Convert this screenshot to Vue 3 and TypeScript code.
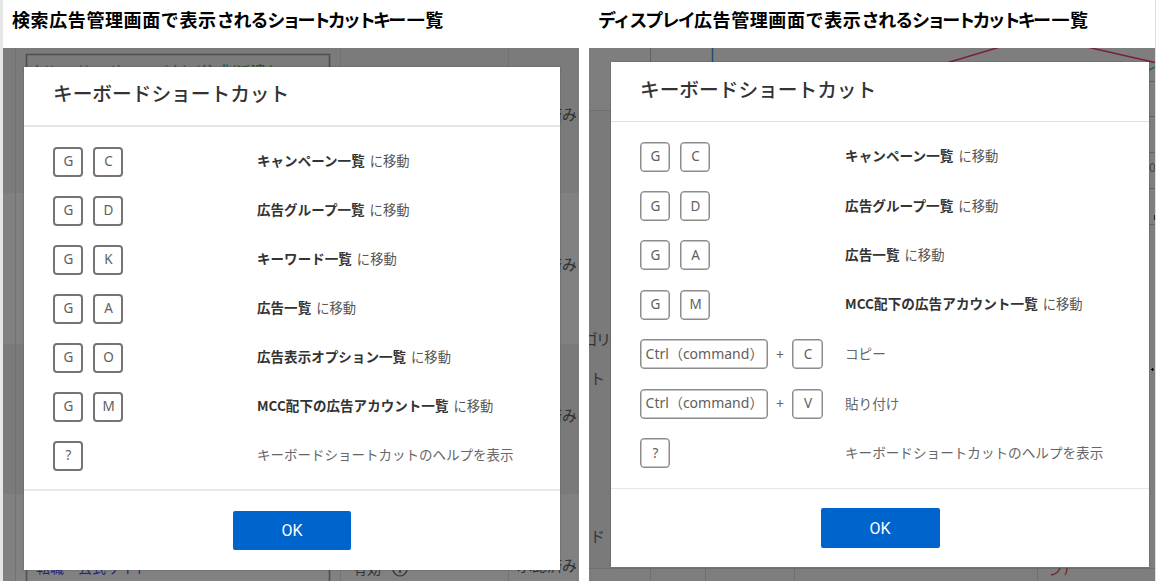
<script setup lang="ts">
interface Shortcut {
  keys: string[]
  plus?: boolean
  target?: string
  text: string
}

interface HeadingPart {
  text: string
  kind: string
}

interface Panel {
  id: string
  heading: HeadingPart[]
  shortcuts: Shortcut[]
}

const MOVE = 'に移動'
const HELP: Shortcut = { keys: ['?'], text: 'キーボードショートカットのヘルプを表示' }

const headingTail: HeadingPart[] = [
  { text: 'で表示', kind: 'kanji' },
  { text: 'される', kind: 'hira' },
  { text: 'ショートカットキ', kind: 'kana' },
  { text: 'ー一覧', kind: 'kanji' },
]

const panels: Panel[] = [
  {
    id: 'search',
    heading: [{ text: '検索広告管理画面', kind: 'kanji' }, ...headingTail],
    shortcuts: [
      { keys: ['G', 'C'], target: 'キャンペーン一覧', text: MOVE },
      { keys: ['G', 'D'], target: '広告グループ一覧', text: MOVE },
      { keys: ['G', 'K'], target: 'キーワード一覧', text: MOVE },
      { keys: ['G', 'A'], target: '広告一覧', text: MOVE },
      { keys: ['G', 'O'], target: '広告表示オプション一覧', text: MOVE },
      { keys: ['G', 'M'], target: 'MCC配下の広告アカウント一覧', text: MOVE },
      HELP,
    ],
  },
  {
    id: 'display',
    heading: [
      { text: 'ディスプレイ', kind: 'kana-wide' },
      { text: '広告管理画面', kind: 'kanji' },
      ...headingTail,
    ],
    shortcuts: [
      { keys: ['G', 'C'], target: 'キャンペーン一覧', text: MOVE },
      { keys: ['G', 'D'], target: '広告グループ一覧', text: MOVE },
      { keys: ['G', 'A'], target: '広告一覧', text: MOVE },
      { keys: ['G', 'M'], target: 'MCC配下の広告アカウント一覧', text: MOVE },
      { keys: ['Ctrl（command）', 'C'], plus: true, text: 'コピー' },
      { keys: ['Ctrl（command）', 'V'], plus: true, text: '貼り付け' },
      HELP,
    ],
  },
]

// y of the status text in each table row behind the search modal
const statusRows = [120, 270, 421, 571]
</script>

<template>
  <div class="page">
    <section v-for="p in panels" :key="p.id" class="panel" :class="p.id">
      <h1 class="heading">
        <span v-for="(h, i) in p.heading" :key="i" :class="h.kind">{{ h.text }}</span>
      </h1>

      <div class="screen">
        <!-- dimmed page behind the modal -->
        <svg v-if="p.id === 'search'" class="backdrop" width="576" height="533" viewBox="3 48 576 533">
          <rect x="3" y="48" width="576" height="533" fill="#7b7b7b" />
          <rect x="3" y="193" width="576" height="151" fill="#818181" />
          <rect x="3" y="344" width="576" height="150" fill="#7a7a7a" />
          <rect x="3" y="494" width="576" height="87" fill="#818181" />
          <path d="M15.5 48V581M340.5 48V581M508.5 48V581" stroke="#727272" />
          <path d="M26.5 70V54.5H329.5V70M26.5 568V581M329.5 568V581" fill="none" stroke="#4f4f4f" stroke-width="1.6" />
          <text x="35" y="76" fill="#4a4f49" font-size="14" textLength="237" lengthAdjust="spacingAndGlyphs">https://motionnavi.biz/<tspan fill="#1f5416">公式/派遣/</tspan></text>
          <text x="36" y="573" fill="#27277a" font-size="14" textLength="112" lengthAdjust="spacingAndGlyphs">転職・公式サイト</text>
          <text x="353" y="574" fill="#333" font-size="14" textLength="28">有効</text>
          <circle cx="400" cy="569" r="7" fill="none" stroke="#333" stroke-width="1.2" />
          <path d="M400 567V573" stroke="#333" stroke-width="1.5" />
          <text v-for="y in statusRows" :key="y" x="517" :y="y" fill="#303030" font-size="15" textLength="60">承認済み</text>
        </svg>
        <svg v-else class="backdrop" width="566" height="533" viewBox="589 48 566 533">
          <rect x="589" y="48" width="566" height="533" fill="#7e7e7e" />
          <rect x="589" y="111" width="22" height="457" fill="#7a7a7a" />
          <path d="M589 110.5H611M589 568.5H1155M650.5 568V581M705.5 568V581M794.5 568V581M1037.5 568V581" stroke="#6f6f6f" />
          <path d="M650.5 48V62" stroke="#606060" />
          <path d="M712.5 48V62" stroke="#244c72" stroke-width="1.5" />
          <path d="M948 62.5L1000 47M1087 47L1155 62.5" stroke="#7a2034" stroke-width="1.5" />
          <path d="M1149 70L1155 67" stroke="#1e6b62" stroke-width="1.6" />
          <path d="M1149 81.5H1155M1149 116.5H1155M1149 152.5H1155M1149 188.5H1155M1149 224.5H1155" stroke="#666" />
          <text x="1149" y="172" fill="#444" font-size="12">0</text>
          <rect x="1154" y="215" width="2" height="5" fill="#222" />
          <path d="M1152.5 368V371M1151 369.5H1154" stroke="#000" />
          <text x="583" y="345" fill="#333" font-size="15" textLength="28">ゴリ</text>
          <text x="590" y="384" fill="#333" font-size="15">ト</text>
          <text x="590" y="542" fill="#333" font-size="15">ド</text>
          <path d="M1051 575Q1058 574 1060 568M1065 575Q1067 572 1067 568" fill="none" stroke="#6b2a2a" stroke-width="1.3" />
        </svg>

        <div class="modal">
          <h2 class="title">キーボードショートカット</h2>
          <ul class="list">
            <li v-for="(s, i) in p.shortcuts" :key="i" class="row">
              <span class="keys" :class="{ combo: s.plus }">
                <template v-for="(k, j) in s.keys" :key="j">
                  <span v-if="s.plus && j > 0" class="plus">+</span>
                  <kbd :class="{ wide: k.length > 1 }"><span>{{ k }}</span></kbd>
                </template>
              </span>
              <span class="desc"><b v-if="s.target">{{ s.target }}</b><i :class="{ move: s.target }">{{ s.text }}</i></span>
            </li>
          </ul>
          <div class="footer"><button>OK</button></div>
        </div>
      </div>
    </section>
  </div>
</template>

<style>
body { background: #fff; overflow: hidden; }
</style>

<style scoped>
.page { display: flex; gap: 10px; width: 1156px; height: 581px; box-sizing: border-box; border-left: 3px solid #e6e6e6; border-right: 1px solid #dedede; overflow: hidden; background: #fff; font-family: "Noto Sans CJK JP", sans-serif; }
.panel { display: flex; flex-direction: column; flex-shrink: 0; }
.search { width: 576px; }
.display { width: 566px; }

.heading { margin: 0; height: 48px; box-sizing: border-box; padding: 6px 0 0 9px; font-size: 18px; line-height: 27px; font-weight: 700; color: #000; white-space: nowrap; }
.heading span { display: inline-block; }
.kanji { letter-spacing: 0.6px; }
.hira { letter-spacing: -1.1px; }
.kana { letter-spacing: -2.9px; }
.kana-wide { letter-spacing: -1.8px; }

.screen { position: relative; height: 533px; box-sizing: border-box; overflow: hidden; }
.search .screen { padding: 19px 0 0 21px; }
.display .screen { padding: 14px 0 0 22px; }
.backdrop { position: absolute; left: 0; top: 0; }

.modal { position: relative; display: flex; flex-direction: column; background: #fff; box-shadow: 0 0 2px rgba(0, 0, 0, 0.25); }
.search .modal { width: 536px; height: 503px; }
.display .modal { width: 538px; height: 505px; }
.title { margin: 0; padding-left: 29px; font-size: 19.7px; font-weight: 500; color: #333; line-height: 51px; height: 58px; border-bottom: 2px solid #e6e6e6; }
.display .title { height: 59px; line-height: 54px; border-bottom-width: 1px; border-color: #e2e2e2; }

.list { flex: 1; margin: 0; padding: 10px 0 0 29px; list-style: none; }
.row { display: flex; align-items: center; height: 49px; }
.display .row { height: 49.4px; }
.keys { display: flex; align-items: center; gap: 10px; width: 204px; }
.display .keys { width: 205px; }
.keys.combo { gap: 0; }
kbd { display: flex; align-items: center; justify-content: center; width: 30px; height: 30px; box-sizing: border-box; border: 2px solid #747474; border-radius: 4px; font-family: "Noto Sans", "Noto Sans CJK JP", sans-serif; font-size: 13.5px; line-height: 20px; color: #606060; }
.display kbd { border: 1px solid #8c8c8c; box-shadow: inset 0 0 0 0.5px #8c8c8c; }
kbd span { margin: 0 0 2px 1px; }
.display kbd span { margin-bottom: 1px; }
kbd.wide { width: 128px; font-size: 14px; }
.combo kbd:last-child { width: 31px; }
.plus { width: 24px; text-align: center; font-family: "Noto Sans", sans-serif; font-size: 14px; color: #666; }
.desc { font-size: 13.5px; line-height: 20px; white-space: nowrap; padding-bottom: 3px; color: #666; }
.display .desc { font-size: 13.6px; padding-bottom: 2px; }
.desc b { font-weight: 700; color: #333; letter-spacing: 0.05px; }
.desc i { font-style: normal; }
.desc .move { margin-left: 5px; font-size: 13.3px; color: #555; }

.footer { height: 81px; border-top: 2px solid #e8e8e8; display: flex; justify-content: center; align-items: flex-start; padding-top: 20px; box-sizing: border-box; }
.display .footer { height: 79px; border-top: 1px solid #e6e6e6; padding-top: 19px; }
button { width: 118px; height: 39px; padding: 0; border: none; border-radius: 2px; background: #0064cd; color: #fff; font-family: Roboto, sans-serif; font-size: 16px; line-height: 37px; }
.display button { width: 119px; height: 40px; }
</style>
